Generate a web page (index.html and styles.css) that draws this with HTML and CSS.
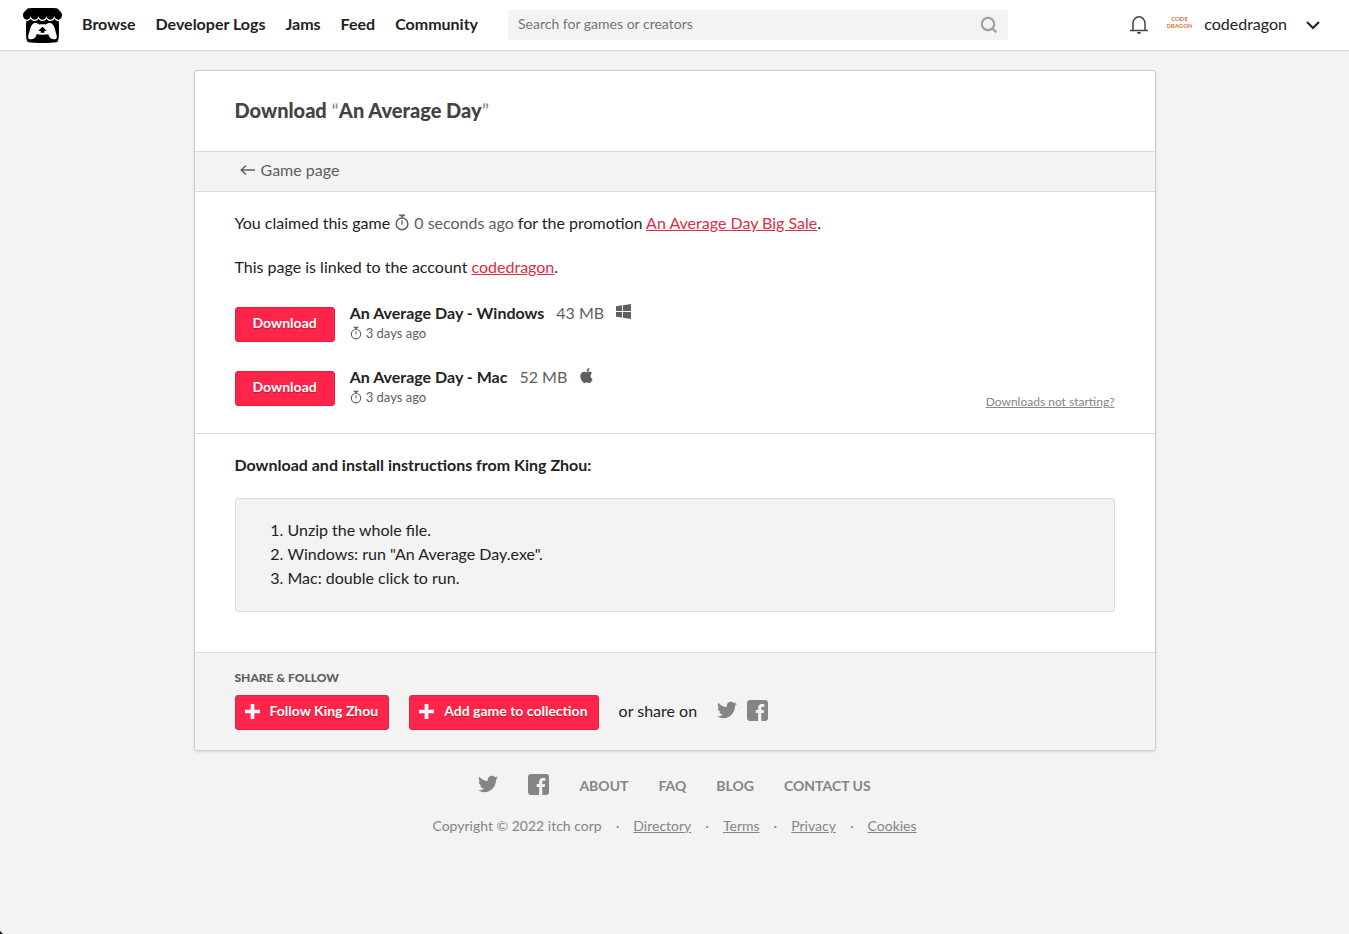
FILE: index.html
```html
<!DOCTYPE html>
<html lang="en">
<head>
<meta charset="utf-8">
<meta name="viewport" content="width=device-width, initial-scale=1">
<title>Download An Average Day - itch.io</title>
<link rel="stylesheet" href="styles.css">
</head>
<body>
<svg class="symbols" aria-hidden="true">
  <symbol id="stopwatch" viewBox="0 0 16 18">
    <path d="M5 .5h6v2H9v1.6H7V2.500H5z" fill="currentColor"/>
    <circle cx="8" cy="10.500" r="6.200" fill="none" stroke="currentColor" stroke-width="1.600"/>
    <path d="M7.300 6.500h1.400v4.500H7.300z" fill="currentColor"/>
  </symbol>
  <symbol id="twitter" viewBox="0 0 24 24">
    <path fill="currentColor" d="M23.954 4.569c-.885.389-1.830.654-2.825.775 1.014-.611 1.794-1.574 2.163-2.723-.951.555-2.005.959-3.127 1.184-.896-.959-2.173-1.559-3.591-1.559-2.717 0-4.920 2.203-4.920 4.917 0 .390.045.765.127 1.124C7.691 8.094 4.066 6.130 1.640 3.161c-.427.722-.666 1.561-.666 2.475 0 1.710.870 3.213 2.188 4.096-.807-.026-1.566-.248-2.228-.616v.061c0 2.385 1.693 4.374 3.946 4.827-.413.111-.849.171-1.296.171-.314 0-.615-.030-.916-.086.631 1.953 2.445 3.377 4.604 3.417-1.680 1.319-3.809 2.105-6.102 2.105-.390 0-.779-.023-1.170-.067 2.189 1.394 4.768 2.209 7.557 2.209 9.054 0 13.999-7.496 13.999-13.986 0-.209 0-.420-.015-.630.961-.689 1.800-1.560 2.460-2.548z"/>
  </symbol>
  <symbol id="facebook" viewBox="0 0 20 20">
    <path fill="currentColor" d="M3 0h14a3 3 0 0 1 3 3v14a3 3 0 0 1-3 3h-3.400v-7.700h2.500V9.600h-2.500V7.900c0-.9.400-1.400 1.400-1.400h1.500V3.700h-2.200c-2.600 0-3.700 1.600-3.700 3.800v2.100H8.300v2.700h2.300V20H3a3 3 0 0 1-3-3V3a3 3 0 0 1 3-3z"/>
  </symbol>
  <symbol id="plus" viewBox="0 0 14 14">
    <path fill="currentColor" d="M5.300 0h3.400v5.300H14v3.400H8.700V14H5.300V8.700H0V5.300h5.300z"/>
  </symbol>
</svg>

<header class="header">
  <a class="logo" href="#" aria-label="itch.io">
    <svg viewBox="0 1.200 24 21.600" width="39" height="35" aria-hidden="true"><path d="M3.130 1.338C2.080 1.960.020 4.328 0 4.950v1.030c0 1.303 1.220 2.450 2.325 2.450 1.330 0 2.436-1.102 2.436-2.410 0 1.308 1.070 2.410 2.400 2.410 1.328 0 2.362-1.102 2.362-2.410 0 1.308 1.137 2.410 2.466 2.410h.024c1.330 0 2.466-1.102 2.466-2.410 0 1.308 1.034 2.410 2.363 2.410 1.330 0 2.400-1.102 2.400-2.410 0 1.308 1.106 2.410 2.435 2.410C22.780 8.430 24 7.282 24 5.980V4.950c-.020-.620-2.082-2.990-3.130-3.612-3.253-.114-5.508-.134-8.870-.133-3.362 0-7.945.053-8.870.133zm6.376 6.477a2.740 2.740 0 0 1-.468.602c-.5.490-1.190.795-1.947.795a2.786 2.786 0 0 1-1.950-.795c-.182-.178-.320-.370-.446-.590-.127.222-.303.412-.486.590a2.788 2.788 0 0 1-1.950.795c-.092 0-.187-.025-.264-.052-.107 1.113-.152 2.176-.168 2.950v.005l-.006 1.167c.020 2.334-.230 7.564 1.030 8.850 1.952.454 5.545.662 9.150.663 3.605 0 7.198-.210 9.150-.664 1.260-1.284 1.010-6.514 1.030-8.848l-.006-1.167v-.004c-.016-.775-.060-1.838-.168-2.950-.077.026-.172.052-.263.052a2.788 2.788 0 0 1-1.950-.795c-.184-.178-.360-.368-.486-.590-.127.220-.265.412-.447.590a2.786 2.786 0 0 1-1.950.794c-.760 0-1.446-.303-1.948-.793a2.740 2.740 0 0 1-.468-.602 2.738 2.738 0 0 1-.463.602 2.787 2.787 0 0 1-1.950.794h-.160a2.787 2.787 0 0 1-1.950-.793 2.738 2.738 0 0 1-.464-.602zm-2.004 2.590v.002c.795.002 1.500 0 2.373.953.687-.072 1.406-.108 2.125-.107.720 0 1.438.035 2.125.107.873-.953 1.578-.950 2.372-.953.376 0 1.876 0 2.920 2.934l1.123 4.028c.832 2.995-.266 3.068-1.636 3.070-2.030-.075-3.156-1.550-3.156-3.025-1.124.184-2.436.276-3.748.277-1.312 0-2.624-.093-3.748-.277 0 1.475-1.125 2.950-3.156 3.026-1.370-.004-2.468-.077-1.636-3.072l1.122-4.027c1.045-2.934 2.545-2.934 2.920-2.934zM12 12.714c-.002.002-2.140 1.964-2.523 2.662l1.400-.056v1.220c0 .056.560.033 1.123.007.562.026 1.124.050 1.124-.008v-1.220l1.400.055C14.138 14.677 12 12.713 12 12.713z"/></svg>
  </a>
  <nav class="nav">
    <a href="#">Browse</a>
    <a href="#">Developer Logs</a>
    <a href="#">Jams</a>
    <a href="#">Feed</a>
    <a href="#">Community</a>
  </nav>
  <form class="search" role="search">
    <input type="text" placeholder="Search for games or creators" aria-label="Search for games or creators">
    <button type="button" aria-label="Search">
      <svg viewBox="0 0 18 18" width="18" height="18" fill="none" stroke="currentColor" stroke-width="2.200"><circle cx="8" cy="8" r="6.200"/><path d="M12.400 12.400l4 4"/></svg>
    </button>
  </form>
  <div class="user">
    <button type="button" class="bell" aria-label="Notifications">
      <svg viewBox="0 0 18 20" width="18" height="20"><path d="M0 15.500h18M3 15.500V8.500a6 6.700 0 0 1 12 0v7" fill="none" stroke="currentColor" stroke-width="1.500"/><path d="M7 17h4a2 2 0 0 1-4 0z" fill="currentColor"/></svg>
    </button>
    <a class="account" href="#">
      <svg class="avatar" viewBox="0 0 25 25" width="25" height="25" aria-hidden="true"><text x="12.500" y="8" text-anchor="middle">CODE</text><text x="12.500" y="15" text-anchor="middle">DRAGON</text></svg>
      <span class="username">codedragon</span>
    </a>
    <button type="button" class="toggle" aria-label="Account menu">
      <svg viewBox="0 0 14 9" width="14" height="9"><path d="M1 1l6 6 6-6" fill="none" stroke="currentColor" stroke-width="2.200"/></svg>
    </button>
  </div>
</header>

<main class="card">
  <h1 class="title">Download <span class="quote">“</span>An Average Day<span class="quote">”</span></h1>
  <nav class="subnav"><a href="#"><svg viewBox="0 0 15 12" width="15" height="12" aria-hidden="true"><path d="M15 6H1.500M6 1.500L1.200 6 6 10.500" fill="none" stroke="currentColor" stroke-width="1.400"/></svg>Game page</a></nav>

  <section class="downloads">
    <p>You claimed this game <span class="time"><svg width="16" height="17" aria-hidden="true"><use href="#stopwatch"/></svg> 0 seconds ago</span> for the promotion <a href="#">An Average Day Big Sale</a>.</p>
    <p>This page is linked to the account <a href="#">codedragon</a>.</p>
    <div class="files">
      <ul class="uploads">
        <li class="upload">
          <button type="button" class="button">Download</button>
          <div class="info">
            <div class="name"><strong>An Average Day - Windows</strong><span>43 MB</span><svg viewBox="0 0 15 15" width="15" height="15" role="img" aria-label="Windows"><path fill="currentColor" d="M0 2.200l6-.9V7H0zM6.900 1.200L15 0v7H6.900zM0 7.900h6v5.700l-6-.8zM6.900 7.900H15V15l-8.100-1.200z"/></svg></div>
            <div class="date"><svg width="12" height="14" aria-hidden="true"><use href="#stopwatch"/></svg>3 days ago</div>
          </div>
        </li>
        <li class="upload">
          <button type="button" class="button">Download</button>
          <div class="info">
            <div class="name"><strong>An Average Day - Mac</strong><span>52 MB</span><svg viewBox="0 0 24 24" width="15" height="15" role="img" aria-label="macOS"><path fill="currentColor" d="M12.152 6.896c-.948 0-2.415-1.078-3.960-1.040-2.040.027-3.910 1.183-4.961 3.014-2.117 3.675-.546 9.103 1.519 12.090 1.013 1.454 2.208 3.090 3.792 3.039 1.520-.065 2.090-.987 3.935-.987 1.831 0 2.350.987 3.960.948 1.637-.026 2.676-1.480 3.676-2.948 1.156-1.688 1.636-3.325 1.662-3.415-.039-.013-3.182-1.221-3.220-4.857-.026-3.040 2.480-4.494 2.597-4.559-1.429-2.090-3.623-2.324-4.390-2.376-2-.156-3.675 1.090-4.610 1.090zM15.530 3.830c.843-1.012 1.400-2.427 1.245-3.830-1.207.052-2.662.805-3.532 1.818-.780.896-1.454 2.338-1.273 3.714 1.338.104 2.715-.688 3.559-1.701"/></svg></div>
            <div class="date"><svg width="12" height="14" aria-hidden="true"><use href="#stopwatch"/></svg>3 days ago</div>
          </div>
        </li>
      </ul>
      <a class="help" href="#">Downloads not starting?</a>
    </div>
  </section>

  <section class="instructions">
    <h2>Download and install instructions from King Zhou:</h2>
    <ol>
      <li>Unzip the whole file.</li>
      <li>Windows: run "An Average Day.exe".</li>
      <li>Mac: double click to run.</li>
    </ol>
  </section>

  <section class="share">
    <h3>SHARE &amp; FOLLOW</h3>
    <div class="actions">
      <button type="button" class="button icon-button"><svg width="15" height="15" aria-hidden="true"><use href="#plus"/></svg>Follow King Zhou</button>
      <button type="button" class="button icon-button"><svg width="15" height="15" aria-hidden="true"><use href="#plus"/></svg>Add game to collection</button>
      <span class="or">or share on</span>
      <span class="social">
        <a href="#" aria-label="Share on Twitter"><svg width="20" height="20"><use href="#twitter"/></svg></a>
        <a href="#" aria-label="Share on Facebook"><svg width="21" height="21"><use href="#facebook"/></svg></a>
      </span>
    </div>
  </section>
</main>

<footer class="footer">
  <nav class="primary">
    <a href="#" aria-label="Twitter"><svg width="20" height="20"><use href="#twitter"/></svg></a>
    <a href="#" aria-label="Facebook"><svg width="21" height="21"><use href="#facebook"/></svg></a>
    <a class="link" href="#">ABOUT</a>
    <a class="link" href="#">FAQ</a>
    <a class="link" href="#">BLOG</a>
    <a class="link" href="#">CONTACT US</a>
  </nav>
  <div class="secondary">
    <span>Copyright © 2022 itch corp</span><span>·</span><a href="#">Directory</a><span>·</span><a href="#">Terms</a><span>·</span><a href="#">Privacy</a><span>·</span><a href="#">Cookies</a>
  </div>
</footer>
</body>
</html>
```

FILE: styles.css
```css
* { box-sizing: border-box; }

body {
  margin: 0;
  min-height: 100vh;
  background: radial-gradient(circle at 100% 0, transparent 6px, #000 7px) left bottom / 6px 6px no-repeat, #f3f3f3;
  color: #222;
  font: 16px/24px Lato, "Liberation Sans", sans-serif;
}

button, input { font: inherit; }
svg { display: block; }
.symbols { display: none; }

.header {
  display: flex;
  align-items: center;
  height: 50px;
  padding: 0 29px 0 23px;
  background: #fff;
  box-shadow: 0 1px 2px rgba(0, 0, 0, 0.15);
}
.header a { color: #222; text-decoration: none; }
.logo { flex: none; margin-right: 20px; }
.nav { display: flex; gap: 20px; margin-right: 30px; padding-bottom: 2px; font-weight: 700; white-space: nowrap; }

.search {
  display: flex;
  flex: 0 1 500px;
  height: 30px;
  background: #f3f3f3;
  border-radius: 3px;
}
.search input {
  flex: 1;
  min-width: 0;
  padding: 0 10px 2px;
  border: 0;
  background: none;
  font-size: 14px;
  color: #222;
}
.search input::placeholder { color: #757575; }
.search button {
  display: flex;
  align-items: center;
  padding: 0 10px;
  border: 0;
  background: none;
  color: #a0a0a0;
}

.user { display: flex; align-items: center; margin-left: auto; }
.user button { padding: 0; border: 0; background: none; }
.bell { margin-right: 19px; color: #444; }
.account { display: flex; align-items: center; gap: 12px; margin-right: 19px; }
.username { padding-bottom: 2px; }
.avatar text { font: 900 6px Lato, sans-serif; fill: #e07a45; }
.toggle { color: #222; }

.card {
  max-width: 962px;
  margin: 20px auto 0;
  background: #fff;
  border: 1px solid #ccc;
  border-radius: 3px;
  box-shadow: 0 1px 3px rgba(0, 0, 0, 0.1);
}
.title {
  margin: 0;
  padding: 27px 40px 29px;
  font-size: 20px;
  line-height: 24px;
  font-weight: 900;
  color: #434343;
}
.quote { font-weight: 400; color: #858585; }
.subnav {
  padding: 6px 45px 9px;
  background: #f3f3f3;
  border: solid #dadada;
  border-width: 1px 0;
}
.subnav a { display: flex; align-items: center; gap: 6px; color: #606060; text-decoration: none; }

.downloads { padding: 19px 40px 25px; border-bottom: 1px solid #dadada; }
.downloads p { margin: 0 0 20px; }
.downloads p a { color: #da2c49; }
.time { color: #606060; }
.time svg { display: inline-block; vertical-align: -2px; }
.files { display: flex; justify-content: space-between; align-items: flex-end; }
.uploads { display: grid; gap: 24px; margin: 0; padding: 3px 0 2px; list-style: none; }
.upload { display: flex; gap: 15px; align-items: flex-end; }
.info { height: 40px; }
.name { display: flex; gap: 12px; line-height: 22px; color: #606060; }
.name svg { margin-top: 2px; }
.name strong { color: #222; font-weight: 700; }
.date { display: flex; align-items: center; gap: 4px; font-size: 13px; line-height: 18px; color: #606060; }
.help { font-size: 12px; line-height: 12px; color: #858585; }

.button {
  height: 35px;
  padding: 0 17px 3px;
  border: 1px solid #e0223f;
  border-radius: 3px;
  background: #ff2449;
  color: #fff;
  font-size: 14px;
  font-weight: 700;
  text-shadow: 0 1px 1px rgba(0, 0, 0, 0.3);
}
.icon-button { display: flex; align-items: center; gap: 10px; padding: 0 10px 3px 9px; }

.instructions { padding: 19px 40px 40px; }
.instructions h2 { margin: 0 0 21px; font-size: 16px; line-height: 24px; font-weight: 700; }
.instructions ol {
  margin: 0;
  padding: 19px 52px 21px;
  background: #f3f3f3;
  border: 1px solid #dadada;
  border-radius: 3px;
}

.share { padding: 16px 40px 20px; background: #f3f3f3; border-top: 1px solid #dadada; }
.share h3 { margin: 0 0 8px; font-size: 12px; line-height: 18px; font-weight: 900; color: #606060; }
.actions { display: flex; align-items: center; gap: 20px; }
.or { padding-bottom: 3px; }
.social { display: flex; gap: 10px; padding-bottom: 4px; }
.social a { color: #858585; }

.footer { padding: 18px 20px; font-size: 14px; color: #858585; }
.footer a { color: inherit; }
.primary { display: flex; justify-content: center; align-items: center; gap: 30px; height: 32px; padding-bottom: 2px; font-weight: 700; }
.primary a { text-decoration: none; }
.link { padding-top: 4px; }
.secondary { display: flex; justify-content: center; gap: 14px; margin-top: 13px; }
```
